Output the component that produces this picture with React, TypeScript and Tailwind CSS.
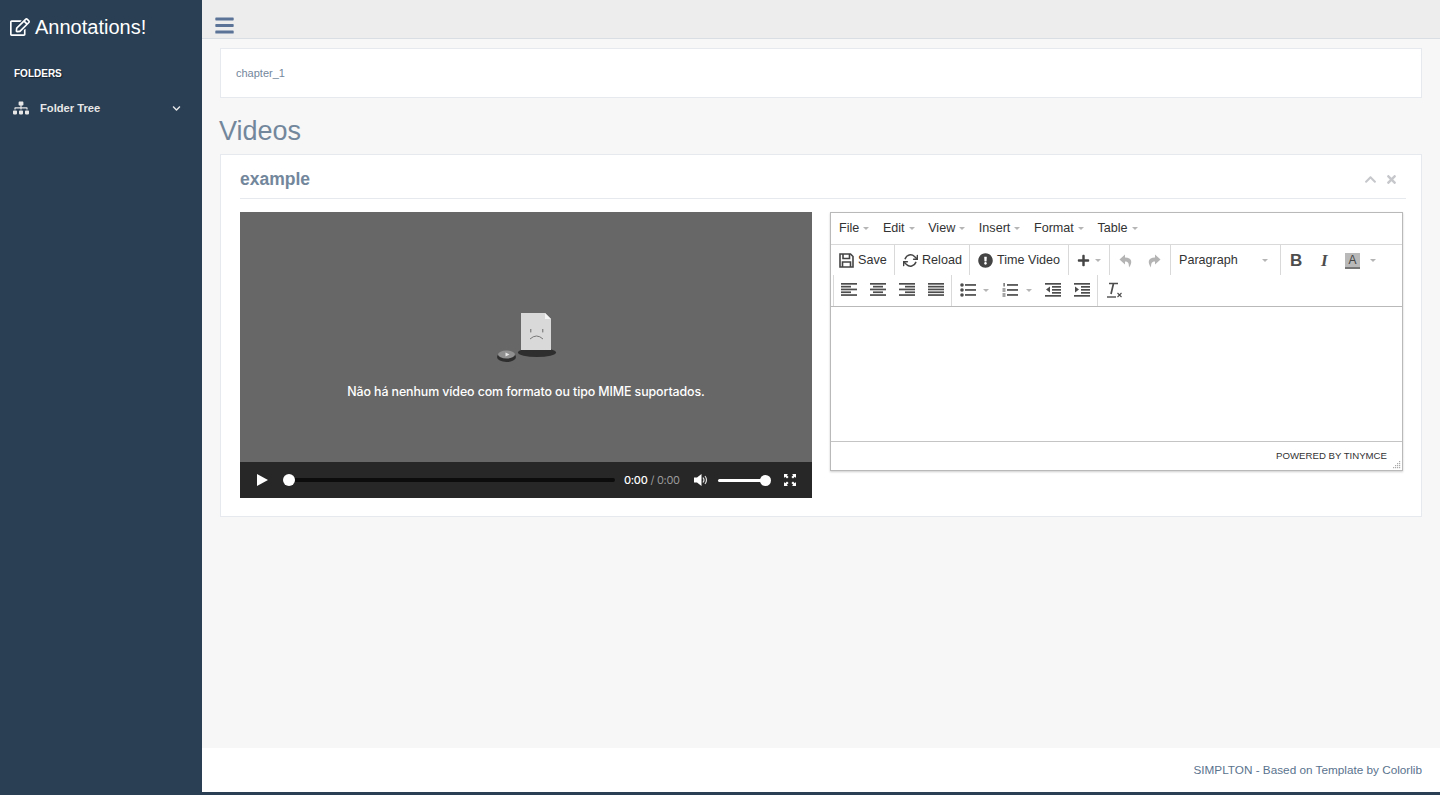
import React from "react";
import { FaRegEdit, FaSitemap, FaBars, FaChevronDown, FaChevronUp, FaTimes, FaPlus, FaExclamationCircle } from "react-icons/fa";
import { FiRefreshCw } from "react-icons/fi";

const Caret = () => (
  <span className="inline-block w-0 h-0 border-x-[3px] border-x-transparent border-t-[3px] border-t-[#b5b5b5]"></span>
);

const Lines = ({ rows }: { rows: [number, number][] }) => (
  <svg width="16" height="14" viewBox="0 0 16 14" fill="#4d4d4d">
    {rows.map((r, i) => (
      <rect key={i} x={r[0]} y={i * 2.8} width={r[1]} height="1.7" />
    ))}
  </svg>
);

const Undo = ({ flip }: { flip?: boolean }) => (
  <svg width="14" height="14" viewBox="0 0 14 14" fill="#b4b4b4" className={flip ? "-scale-x-100" : ""}>
    <path d="M6 0.5 L0.5 5.5 L6 10.5 V7.5 C9 7.5 10 9 10 13.5 C13.5 9 13.5 3.5 6 3.5 Z" />
  </svg>
);

const Sep = () => <div className="w-px self-stretch bg-[#d9d9d9]"></div>;

const MenuItem = ({ label }: { label: string }) => (
  <div className="flex items-center gap-[4px]">
    <span>{label}</span>
    <Caret />
  </div>
);

const Editor = () => (
  <div className="w-[573px] h-[259px] border border-[#b9b9b9] bg-white shadow-[0_1px_2px_rgba(0,0,0,0.2)] flex flex-col text-[12.6px] text-[#333] self-start">
    <div className="h-[32px] border-b border-[#d9d9d9] flex items-center pl-2 gap-[13.6px]">
      <MenuItem label="File" />
      <MenuItem label="Edit" />
      <MenuItem label="View" />
      <MenuItem label="Insert" />
      <MenuItem label="Format" />
      <MenuItem label="Table" />
    </div>
    <div className="h-[30px] flex items-stretch">
      <div className="flex items-center gap-[4px] pl-2 w-[63px] pt-px">
        <svg width="15" height="15" viewBox="0 0 15 15" fill="none" stroke="#444" strokeWidth="1.6">
          <path d="M1 1 H11.5 L14 3.5 V14 H1 Z" />
          <path d="M4 1 V5.5 H10.5 V1" />
          <path d="M3.5 14 V9 H11.5 V14" />
        </svg>
        <span>Save</span>
      </div>
      <Sep />
      <div className="flex items-center gap-[4px] pl-2 w-[74px] pt-px">
        <FiRefreshCw className="text-[15px] text-[#444] w-[15px] h-[15px] [stroke-width:2.4]" />
        <span>Reload</span>
      </div>
      <Sep />
      <div className="flex items-center gap-[4px] pl-2 w-[98px] pt-px">
        <FaExclamationCircle className="text-[15px] text-[#444]" />
        <span>Time Video</span>
      </div>
      <Sep />
      <div className="flex items-center gap-[5px] w-[40px] pl-2 pt-px">
        <FaPlus className="text-[13px] text-[#444]" />
        <Caret />
      </div>
      <Sep />
      <div className="flex items-center gap-[14px] w-[60px] pl-[9px] pt-px">
        <Undo />
        <Undo flip />
      </div>
      <Sep />
      <div className="flex items-center justify-between w-[109px] pl-2 pr-[12px] pt-px">
        <span>Paragraph</span>
        <Caret />
      </div>
      <Sep />
      <div className="flex items-center pl-[9px] pt-px">
        <span className="w-[31px] font-bold text-[17px] text-[#4d4d4d]">B</span>
        <span className="w-[24px] italic font-bold text-[17px] text-[#4d4d4d] font-['Liberation_Serif',serif]">I</span>
        <span className="w-[15px] h-[16px] bg-[#b9b9b9] border-b-2 border-[#777] text-[12px] leading-[14px] text-center text-[#444] mr-[10px]">A</span>
        <Caret />
      </div>
    </div>
    <div className="h-[32px] flex items-stretch border-b border-[#b9b9b9] pl-[2px]">
      <Sep />
      <div className="flex items-center gap-[13px] pl-[7px] w-[117px] pb-px">
        <Lines rows={[[0, 16], [0, 10], [0, 16], [0, 10], [0, 16]]} />
        <Lines rows={[[0, 16], [3, 10], [0, 16], [3, 10], [0, 16]]} />
        <Lines rows={[[0, 16], [6, 10], [0, 16], [6, 10], [0, 16]]} />
        <Lines rows={[[0, 16], [0, 16], [0, 16], [0, 16], [0, 16]]} />
      </div>
      <Sep />
      <div className="flex items-center pl-2 pb-px w-[145px]">
        <svg width="16" height="14" viewBox="0 0 16 14" fill="#4d4d4d">
          <circle cx="2" cy="2" r="1.8" />
          <circle cx="2" cy="7" r="1.8" />
          <circle cx="2" cy="12" r="1.8" />
          <rect x="5" y="1.1" width="11" height="1.7" />
          <rect x="5" y="6.1" width="11" height="1.7" />
          <rect x="5" y="11.1" width="11" height="1.7" />
        </svg>
        <span className="ml-[7px] mr-[13px] flex"><Caret /></span>
        <svg width="16" height="14" viewBox="0 0 16 14" fill="#4d4d4d">
          <rect x="1.5" y="0" width="1.2" height="3.5" />
          <rect x="0.5" y="5.5" width="3" height="1" />
          <rect x="0.5" y="7.5" width="3" height="1" />
          <rect x="0.5" y="10.5" width="3" height="1" />
          <rect x="0.5" y="12.5" width="3" height="1" />
          <rect x="5" y="1.1" width="11" height="1.7" />
          <rect x="5" y="6.1" width="11" height="1.7" />
          <rect x="5" y="11.1" width="11" height="1.7" />
        </svg>
        <span className="ml-[8px] mr-[13px] flex"><Caret /></span>
        <svg width="16" height="14" viewBox="0 0 16 14" fill="#4d4d4d" className="mr-[13px]">
          <rect x="0" y="0" width="16" height="1.7" />
          <rect x="7" y="3" width="9" height="1.7" />
          <rect x="7" y="6" width="9" height="1.7" />
          <rect x="7" y="9" width="9" height="1.7" />
          <rect x="0" y="12" width="16" height="1.7" />
          <path d="M5 3.5 V9.5 L1 6.5 Z" />
        </svg>
        <svg width="16" height="14" viewBox="0 0 16 14" fill="#4d4d4d">
          <rect x="0" y="0" width="16" height="1.7" />
          <rect x="7" y="3" width="9" height="1.7" />
          <rect x="7" y="6" width="9" height="1.7" />
          <rect x="7" y="9" width="9" height="1.7" />
          <rect x="0" y="12" width="16" height="1.7" />
          <path d="M1 3.5 V9.5 L5 6.5 Z" />
        </svg>
      </div>
      <Sep />
      <div className="flex items-center pl-2 pb-px">
        <svg width="17" height="16" viewBox="0 0 17 16" fill="none" stroke="#4d4d4d">
          <path d="M3 1.5 H12 M7.5 1.5 L5 12" strokeWidth="1.7" />
          <path d="M1 15 H10" strokeWidth="1.4" />
          <path d="M11.5 11 L15.5 15 M15.5 11 L11.5 15" strokeWidth="1.1" />
        </svg>
      </div>
    </div>
    <div className="flex-1"></div>
    <div className="h-[29px] border-t border-[#c4c4c4] flex items-center justify-end pr-[15px] pt-[1px] text-[9.65px] text-[#333] relative">
      <span>POWERED BY TINYMCE</span>
      <svg width="9" height="9" viewBox="0 0 9 9" fill="#aaa" className="absolute right-[1px] bottom-[1px]">
        <rect x="7" y="1" width="1.2" height="1.2" />
        <rect x="5" y="3" width="1.2" height="1.2" />
        <rect x="7" y="3" width="1.2" height="1.2" />
        <rect x="3" y="5" width="1.2" height="1.2" />
        <rect x="5" y="5" width="1.2" height="1.2" />
        <rect x="7" y="5" width="1.2" height="1.2" />
        <rect x="1" y="7" width="1.2" height="1.2" />
        <rect x="3" y="7" width="1.2" height="1.2" />
        <rect x="5" y="7" width="1.2" height="1.2" />
        <rect x="7" y="7" width="1.2" height="1.2" />
      </svg>
    </div>
  </div>
);

const VideoPlayer = () => (
  <div className="w-[572px] h-[286px] bg-[#676767] flex flex-col">
    <div className="flex-1 flex flex-col items-center">
      <svg width="62" height="56" viewBox="0 0 62 56" className="mt-[99px] ml-[1px]">
        <ellipse cx="41" cy="41.5" rx="19" ry="4.5" fill="#2e2e2e" />
        <ellipse cx="10.5" cy="46" rx="9.5" ry="5" fill="#2e2e2e" />
        <ellipse cx="10.5" cy="43.5" rx="8.5" ry="4" fill="#8f8f8f" />
        <path d="M9.5 41.5 L13.5 43.5 L9.5 45.5 Z" fill="#e6e6e6" />
        <path d="M25 2 H49 L55 8 V39 H25 Z" fill="#d9d9d9" />
        <path d="M49 2 L55 8 H49 Z" fill="#f4f4f4" />
        <rect x="34" y="18" width="1.4" height="3.4" fill="#8a8a8a" />
        <rect x="46" y="18" width="1.4" height="3.4" fill="#8a8a8a" />
        <path d="M34 28 Q40.5 22 47 28" fill="none" stroke="#777" strokeWidth="1" />
      </svg>
      <div className="mt-[17px] text-white text-[12.4px] leading-[16px] font-['Inter',sans-serif] font-medium tracking-[-0.1px]">
        Não há nenhum vídeo com formato ou tipo MIME suportados.
      </div>
    </div>
    <div className="h-[36px] bg-[#272727] flex items-center font-['Inter',sans-serif] text-[11px] tracking-[-0.3px]">
      <svg width="13" height="14" viewBox="0 0 13 14" fill="#fff" className="ml-[16px] mr-[15px]">
        <path d="M1 1 L12 7 L1 13 Z" />
      </svg>
      <div className="relative w-[331px] h-[4px] rounded-full bg-[#0c0c0c] mr-[9px]">
        <span className="absolute -left-[1px] -top-[4px] w-[12px] h-[12px] rounded-full bg-white"></span>
      </div>
      <span className="text-white font-medium">0:00</span>
      <span className="text-[#9a9a9a] ml-[3px]">/ 0:00</span>
      <svg width="15" height="14" viewBox="0 0 15 14" className="ml-[14px] mr-[9px]">
        <path d="M0 4.5 H3 L7.5 1 V13 L3 9.5 H0 Z" fill="#fff" />
        <path d="M9 4.5 Q11 7 9 9.5 M11 3 Q14 7 11 11" fill="none" stroke="#ddd" strokeWidth="1.2" />
      </svg>
      <div className="relative w-[48px] h-[3px] rounded-full bg-white mr-[17px]">
        <span className="absolute -right-[5px] -top-[4px] w-[11px] h-[11px] rounded-full bg-white"></span>
      </div>
      <svg width="14" height="14" viewBox="0 0 14 14" fill="#fff">
        <path d="M1 1 H5 L3.8 2.2 L5.6 4 L4 5.6 L2.2 3.8 L1 5 Z" />
        <path d="M13 1 V5 L11.8 3.8 L10 5.6 L8.4 4 L10.2 2.2 L9 1 Z" />
        <path d="M1 13 V9 L2.2 10.2 L4 8.4 L5.6 10 L3.8 11.8 L5 13 Z" />
        <path d="M13 13 H9 L10.2 11.8 L8.4 10 L10 8.4 L11.8 10.2 L13 9 Z" />
      </svg>
    </div>
  </div>
);

const App = () => {
  return (
    <div className="h-[795px] flex bg-[#2a3f54] font-['Liberation_Sans',Arial,sans-serif] overflow-hidden">
      <aside className="w-[202px] shrink-0 text-[#ecf0f1]">
        <div className="h-[53px] pl-[10px] flex items-center gap-[5px] text-white text-[20px]">
          <FaRegEdit className="text-[20px] mt-[1px]" />
          <span>Annotations!</span>
        </div>
        <div className="pl-[14px] mt-[15px] text-[10px] font-bold text-white leading-[12px] [text-shadow:1px_1px_1px_rgba(0,0,0,0.5)]">FOLDERS</div>
        <div className="mt-[20px] h-[16px] pl-[13px] pr-[21px] flex items-center text-[11.2px] font-bold text-[#e7e7e7]">
          <FaSitemap className="text-[16px] mr-[11px]" />
          <span className="flex-1">Folder Tree</span>
          <FaChevronDown className="text-[9px]" />
        </div>
      </aside>

      <div className="flex-1 flex flex-col">
        <div className="h-[39px] bg-[#ededed] border-b border-[#d9dee4] pl-[12px] flex items-start">
          <FaBars className="text-[#5a7397] mt-[15px] w-[21px] h-[21px]" />
        </div>

        <main className="h-[709px] bg-[#f7f7f7] pl-[18px] pr-[18px] pt-[9px] text-[#73879c]">
          <div className="h-[50px] w-[1202px] bg-white border border-[#e6e9ed] flex items-center pl-[15px] text-[11px]">chapter_1</div>
          <h1 className="mt-[17px] text-[27px] leading-[32px] -ml-px">Videos</h1>
          <div className="mt-[7px] h-[363px] w-[1202px] bg-white border border-[#e6e9ed] pl-[19px] pr-[15px]">
            <div className="h-[44px] border-b border-[#e6e9ed] flex items-center justify-between pt-[6px] pr-[8px]">
              <span className="text-[17.5px] font-bold">example</span>
              <div className="flex items-center gap-[8px] text-[#c5c7cb] text-[13px]">
                <FaChevronUp />
                <FaTimes />
              </div>
            </div>
            <div className="mt-[13px] flex gap-[18px]">
              <VideoPlayer />
              <Editor />
            </div>
          </div>
        </main>

        <footer className="h-[44px] bg-white flex items-center justify-end pr-[18px] text-[11.75px] text-[#5a738e]">
          SIMPLTON - Based on Template by Colorlib
        </footer>
        <div className="h-[3px] bg-[#2a3f54]"></div>
      </div>
    </div>
  );
};

export default App;
